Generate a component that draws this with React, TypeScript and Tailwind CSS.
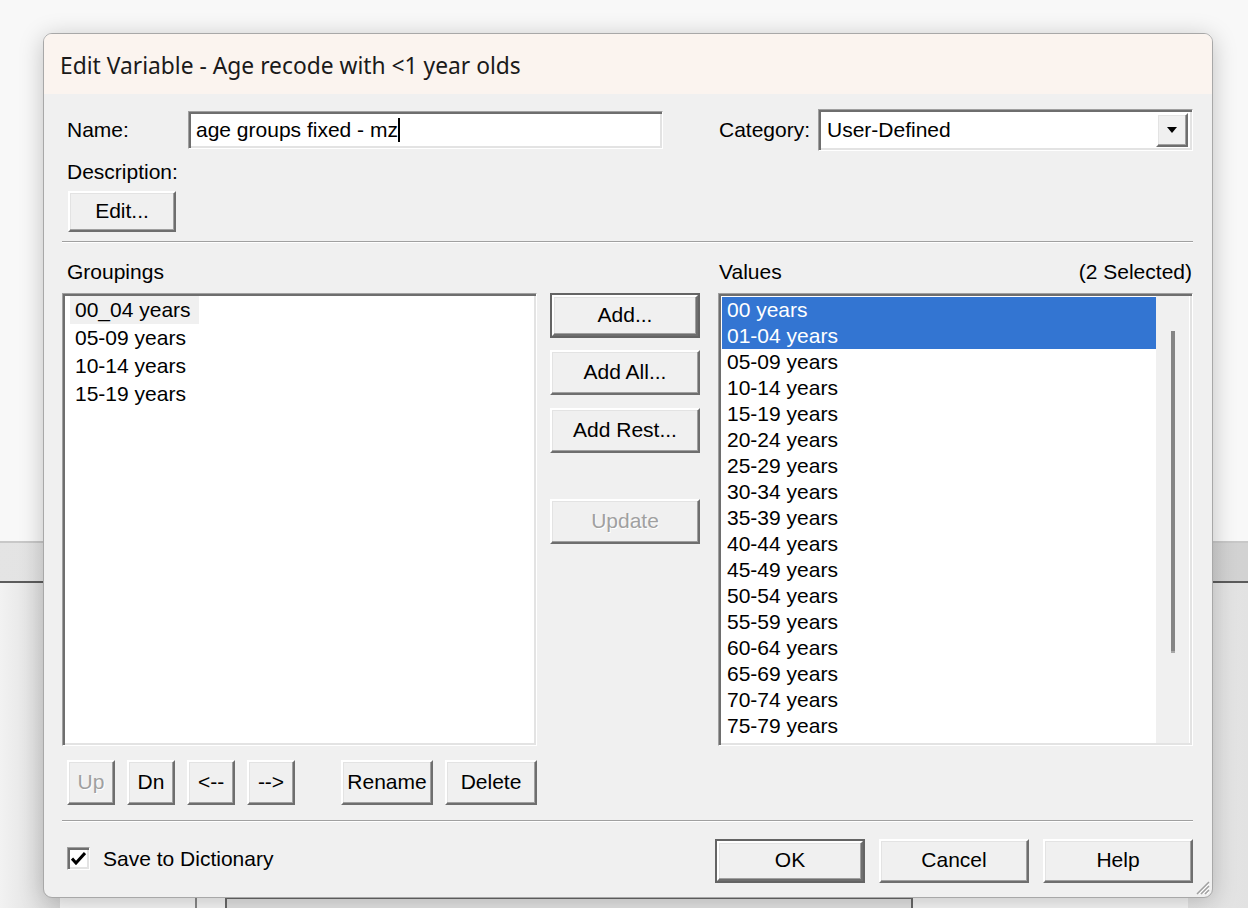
import React from "react";

const font = "font-['Liberation_Sans',Arial,sans-serif] text-[21px] text-black";

const sunken =
    "border border-t-[#a0a0a0] border-l-[#a0a0a0] border-b-white border-r-white shadow-[inset_2px_2px_0_#6e6e6e,inset_-2px_-2px_0_#e3e3e3]";

const raised =
    "border-2 border-t-white border-l-white border-r-[#6e6e6e] border-b-[#6e6e6e] shadow-[inset_-1px_-1px_0_#a0a0a0,inset_1px_1px_0_#e3e3e3]";

function Btn({
    label,
    className,
    isDefault,
    disabled,
}: {
    label: string;
    className: string;
    isDefault?: boolean;
    disabled?: boolean;
}) {
    const text = disabled ? "text-[#a0a0a0] [text-shadow:1px_1px_0_#fff]" : "text-black";
    if (isDefault) {
        return (
            <div className={`${className} border-2 border-[#646464] bg-[#f0f0f0] flex`}>
                <div className={`${raised} flex-1 flex items-center justify-center pb-[2px] ${text}`}>{label}</div>
            </div>
        );
    }
    return (
        <div className={`${className} ${raised} bg-[#f0f0f0] flex items-center justify-center pb-[2px] ${text}`}>
            {label}
        </div>
    );
}

const groupings = ["00_04 years", "05-09 years", "10-14 years", "15-19 years"];

const values = [
    "00 years",
    "01-04 years",
    "05-09 years",
    "10-14 years",
    "15-19 years",
    "20-24 years",
    "25-29 years",
    "30-34 years",
    "35-39 years",
    "40-44 years",
    "45-49 years",
    "50-54 years",
    "55-59 years",
    "60-64 years",
    "65-69 years",
    "70-74 years",
    "75-79 years",
];

export default function App() {
    return (
        <div className="relative w-[1248px] h-[908px] overflow-hidden bg-[#f8f8f8]">
            {/* window behind the dialog */}
            <div className="absolute left-0 top-[541px] w-[60px] bottom-0 bg-gradient-to-r from-[#f2f2f2] to-[#d9d9d9]" />
            <div className="absolute right-0 top-[541px] w-[60px] bottom-0 bg-gradient-to-r from-[#e6e6e6] to-[#e2e2e2]" />
            <div className="absolute left-0 right-0 top-[541px] h-[42px] border-t-2 border-t-[#c8c8c8] border-b-2 border-b-[#5c5c5c] bg-gradient-to-r from-[#e4e4e4] to-[#d2d2d2]" />
            <div className="absolute left-[195px] top-[894px] w-[2px] h-[14px] bg-[#8a8a8a]" />
            <div className="absolute left-[225px] top-[897px] w-[688px] h-[14px] border-2 border-[#6a6a6a] bg-[#e4e4e4]" />

            {/* dialog */}
            <div
                className={`absolute left-[43px] top-[33px] w-[1170px] h-[865px] flex flex-col rounded-[9px] overflow-hidden border border-[#a8a8a8] bg-[#f0f0f0] shadow-[0_4px_24px_rgba(0,0,0,0.22)] ${font}`}
            >
                <div className="h-[60px] shrink-0 bg-[#fbf4ef] flex items-center pl-[16px] pt-[5px] font-['Noto_Sans',sans-serif] text-[22.8px] text-[#1a1a1a]">
                    Edit Variable - Age recode with &lt;1 year olds
                </div>

                <div className="flex-1 flex flex-col pl-[18px] pr-[19px] pt-[15px]">
                    {/* name / category */}
                    <div className="flex items-center h-[42px]">
                        <div className="w-[126px] pl-[5px]">Name:</div>
                        <div className={`w-[475px] h-[38px] bg-white ${sunken} flex items-center pl-[7px]`}>
                            <span>age groups fixed - mz</span>
                            <span className="w-[2px] h-[24px] bg-black" />
                        </div>
                        <div className="w-[55px]" />
                        <div className="w-[100px] pl-[1px]">Category:</div>
                        <div className={`w-[375px] h-[42px] bg-white ${sunken} flex items-center pl-[8px] pr-[4px]`}>
                            <span className="flex-1">User-Defined</span>
                            <div className={`w-[32px] h-[34px] ${raised} bg-[#f0f0f0] flex items-center justify-center`}>
                                <svg width="10" height="6" viewBox="0 0 10 6">
                                    <path d="M0 0h10L5 6z" fill="#000" />
                                </svg>
                            </div>
                        </div>
                    </div>

                    <div className="mt-[10px] h-[22px] leading-[22px] pl-[5px]">Description:</div>
                    <Btn label="Edit..." className="mt-[8px] ml-[6px] w-[108px] h-[41px]" />

                    <div className="mt-[9px] h-[2px] border-t border-t-[#a0a0a0] border-b border-b-white" />

                    {/* list headers */}
                    <div className="mt-[18px] h-[22px] leading-[22px] flex">
                        <div className="w-[656px] pl-[5px]">Groupings</div>
                        <div className="flex-1 flex justify-between pl-[1px] pr-[1px]">
                            <span>Values</span>
                            <span>(2 Selected)</span>
                        </div>
                    </div>

                    {/* lists */}
                    <div className="mt-[10px] h-[453px] flex">
                        <div className={`w-[475px] h-full bg-white ${sunken} pt-[2px] pl-[7px]`}>
                            {groupings.map((g, i) => (
                                <div key={g} className="h-[28px] leading-[28px]">
                                    <span className={`inline-block pl-[5px] pr-[8px] ${i === 0 ? "bg-[#f0f0f0]" : ""}`}>{g}</span>
                                </div>
                            ))}
                        </div>

                        <div className="ml-[13px] w-[150px] flex flex-col">
                            <Btn label="Add..." isDefault className="h-[45px]" />
                            <Btn label="Add All..." className="mt-[12px] h-[45px]" />
                            <Btn label="Add Rest..." className="mt-[13px] h-[45px]" />
                            <Btn label="Update" disabled className="mt-[46px] h-[45px]" />
                        </div>

                        <div className={`ml-[18px] w-[475px] h-full bg-white ${sunken} flex p-[3px]`}>
                            <div className="w-[434px] overflow-hidden">
                                {values.map((v, i) => (
                                    <div
                                        key={v}
                                        className={`h-[26px] leading-[26px] pl-[5px] ${i < 2 ? "bg-[#3375d2] text-white" : ""}`}
                                    >
                                        {v}
                                    </div>
                                ))}
                            </div>
                            <div className="flex-1 bg-[#f0f0f0] -mt-[1px] -mb-[1px] flex justify-center pt-[35px]">
                                <div className="w-[4px] h-[322px] bg-[#858585] border-b-2 border-b-[#a8a8a8] ml-[1px]" />
                            </div>
                        </div>
                    </div>

                    {/* bottom buttons */}
                    <div className="mt-[14px] h-[45px] flex pl-[5px]">
                        <Btn label="Up" disabled className="w-[48px] h-[45px]" />
                        <Btn label="Dn" className="ml-[12px] w-[48px] h-[45px]" />
                        <Btn label="<--" className="ml-[12px] w-[48px] h-[45px]" />
                        <Btn label="-->" className="ml-[12px] w-[48px] h-[45px]" />
                        <Btn label="Rename" className="ml-[46px] w-[92px] h-[45px]" />
                        <Btn label="Delete" className="ml-[12px] w-[92px] h-[45px]" />
                    </div>

                    <div className="mt-[15px] h-[2px] border-t border-t-[#a0a0a0] border-b border-b-white" />

                    {/* footer */}
                    <div className="mt-[17px] h-[44px] flex">
                        <div className="flex-1 flex items-start pt-[8px] pl-[5px]">
                            <div className={`w-[23px] h-[23px] bg-white ${sunken} flex items-center justify-center`}>
                                <svg width="15" height="13" viewBox="0 0 15 13">
                                    <path d="M1 6.5l4 4.5 9-10" stroke="#000" strokeWidth="3" fill="none" />
                                </svg>
                            </div>
                            <span className="ml-[13px] leading-[23px]">Save to Dictionary</span>
                        </div>
                        <Btn label="OK" isDefault className="w-[150px] h-[44px]" />
                        <Btn label="Cancel" className="ml-[14px] w-[150px] h-[44px]" />
                        <Btn label="Help" className="ml-[14px] w-[150px] h-[44px]" />
                    </div>
                </div>

                {/* size grip */}
                <svg className="absolute right-[2px] bottom-[2px]" width="16" height="16" viewBox="0 0 16 16">
                    <path d="M15 3L3 15M15 7L7 15M15 11L11 15" stroke="#a0a0a0" strokeWidth="1.5" />
                    <path d="M15 5L5 15M15 9L9 15M15 13L13 15" stroke="#ffffff" strokeWidth="1" />
                </svg>
            </div>
        </div>
    );
}
